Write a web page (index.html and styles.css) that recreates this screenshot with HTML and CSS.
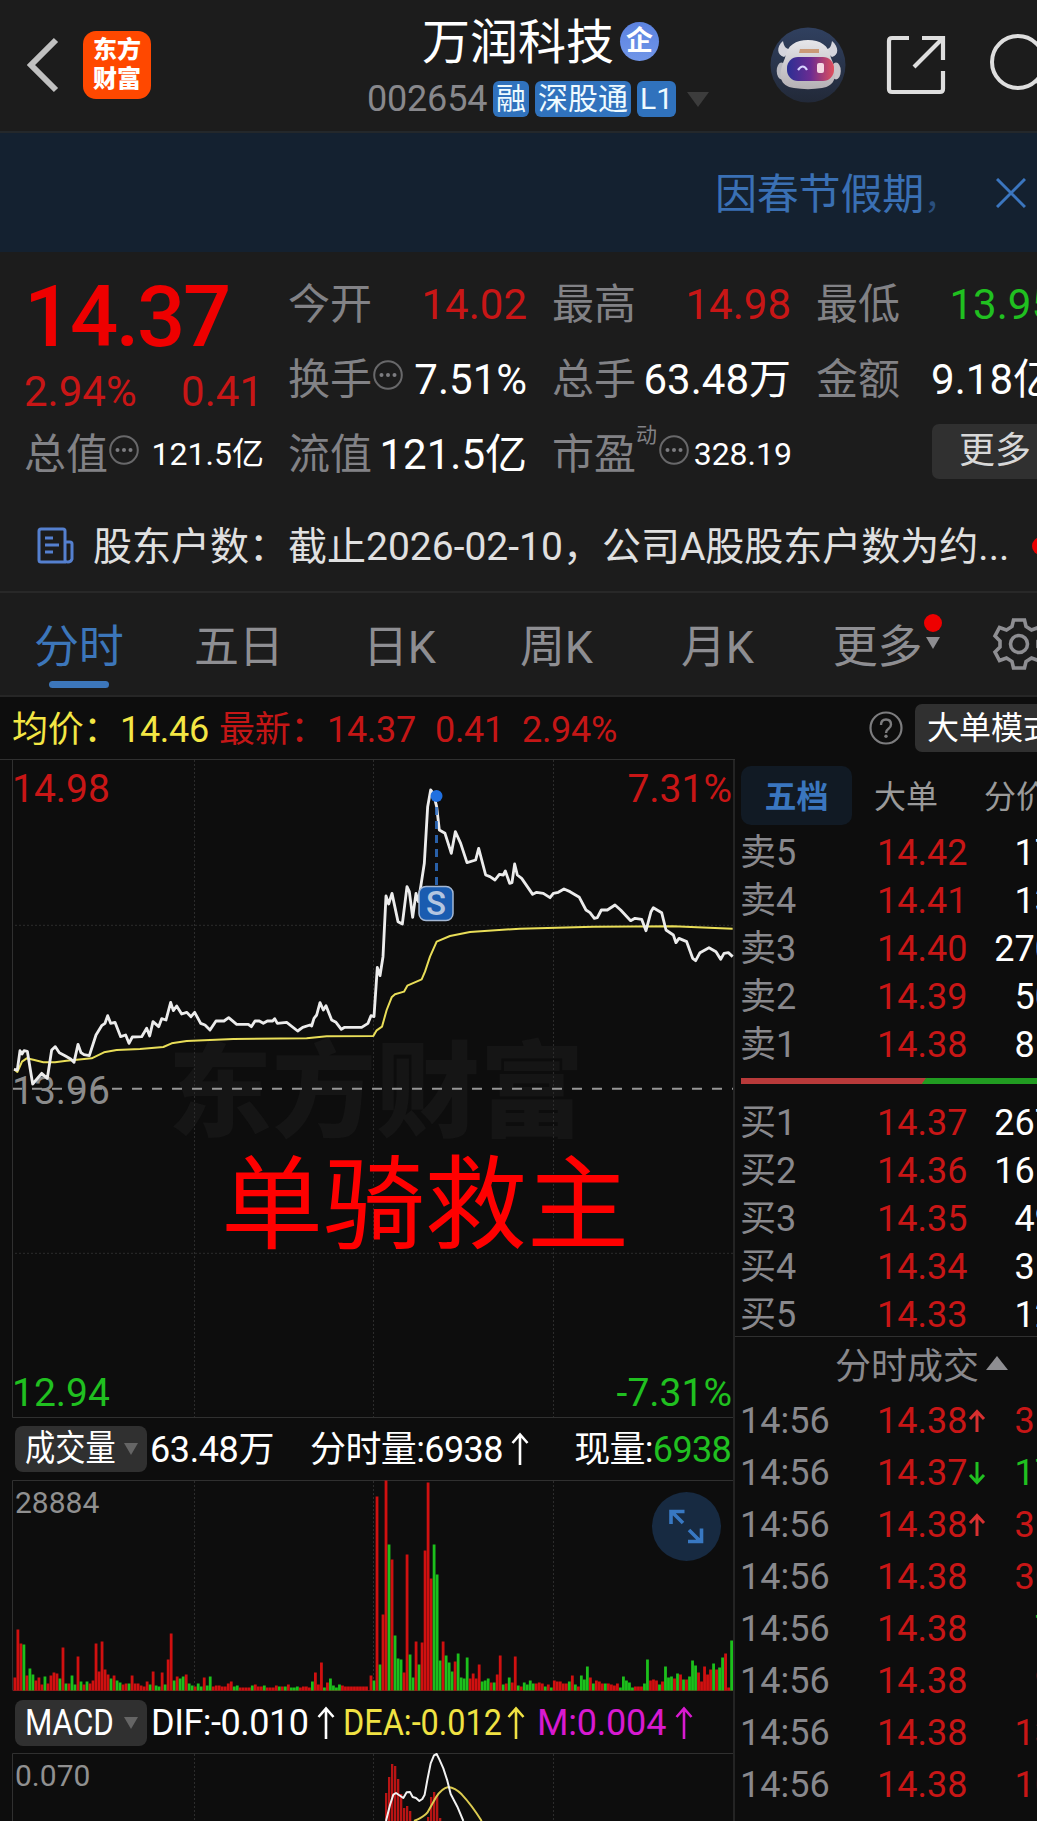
FILE: index.html
```html
<!DOCTYPE html>
<html lang="zh-CN">
<head>
<meta charset="utf-8">
<title>万润科技 002654</title>
<link rel="stylesheet" href="styles.css">
</head>
<body>
<svg class="defs" width="0" height="0">
  <symbol id="more-dots" viewBox="0 0 30 30"><circle cx="15" cy="15" r="13.8" fill="none" stroke="#68686a" stroke-width="2"/><g fill="#7c7c80"><circle cx="8.5" cy="15" r="2"/><circle cx="15" cy="15" r="2"/><circle cx="21.5" cy="15" r="2"/></g></symbol>
  <symbol id="up" viewBox="0 0 18 34"><path d="M9 33V3M1.5 11 9 2.5 16.500 11" fill="none" stroke="currentColor" stroke-width="2.6"/></symbol>
  <symbol id="tick-up" viewBox="0 0 18 24"><path d="M9 23V3M2 10 9 2.500 16 10" fill="none" stroke="currentColor" stroke-width="3"/></symbol>
</svg>
<div class="app">
  <header class="header">
    <svg class="back" width="32" height="58" viewBox="0 0 32 58"><path d="M29 4 4 29 29 54" fill="none" stroke="#c0c0c0" stroke-width="6"/></svg>
    <div class="logo"><span>东方</span><span>财富</span></div>
    <div class="title">
      <div class="name">万润科技<span class="corp">企</span></div>
      <div class="code"><span class="num">002654</span><b>融</b><b>深股通</b><b>L1</b><i class="caret"></i></div>
    </div>
    <svg class="robot" width="76" height="76" viewBox="0 0 76 76">
      <defs>
        <linearGradient id="visor" x1="0" x2="1"><stop offset="0" stop-color="#2b2f94"/><stop offset=".5" stop-color="#6b2c92"/><stop offset="1" stop-color="#e0505c"/></linearGradient>
        <linearGradient id="disc" x1="0" y1="0" x2="0" y2="1"><stop offset="0" stop-color="#30405f"/><stop offset="1" stop-color="#222938"/></linearGradient>
        <linearGradient id="shell" x1="0" y1="0" x2="0" y2="1"><stop offset="0" stop-color="#e6e6ea"/><stop offset="1" stop-color="#b4b0b4"/></linearGradient>
      </defs>
      <circle cx="38" cy="38" r="37.500" fill="url(#disc)"/>
      <path d="M13 14c-7 6-6 14 1 16l8-7c-6-1-8-3-9-9zM62 14c7 6 7 14 0 16l-8-7c6-1 7-3 8-9z" fill="#d5d5dc"/>
      <ellipse cx="11.500" cy="44" rx="4.800" ry="8.500" fill="#b9b9c0"/><ellipse cx="66" cy="44" rx="4.800" ry="8.500" fill="#c9c4c8"/>
      <path d="M15 31c2-13 11-18 23-18s21 5 23 18c8 18 4 28-9 30-9 1.500-19 1.500-28 0-14-2-17-12-9-30z" fill="url(#shell)"/>
      <rect x="17" y="30" width="47" height="24" rx="11" fill="url(#visor)"/>
      <path d="M30 22h19v4H29z" fill="#c68a5e" opacity=".8"/>
      <path d="M28 43q5-7 9 0" fill="none" stroke="#d9d4ff" stroke-width="2.200"/><rect x="47" y="36" width="7" height="10" rx="2" fill="#f4d8e2"/>
    </svg>
    <svg class="share" width="60" height="60" viewBox="0 0 60 60"><path d="M23 3H6Q3 3 3 6v48q0 3 3 3h48q3 0 3-3V36M36 3h21v22M57 3 28 32" fill="none" stroke="#dedede" stroke-width="4.200"/></svg>
    <svg class="search" width="64" height="64" viewBox="0 0 64 64"><circle cx="28" cy="28" r="26" fill="none" stroke="#dedede" stroke-width="4"/><path d="M47 47 61 61" stroke="#dedede" stroke-width="4"/></svg>
  </header>

  <div class="notice"><span>因春节假期<em>，</em></span><svg width="30" height="30" viewBox="0 0 30 30"><path d="M1 1 29 29M29 1 1 29" stroke="#3b76bf" stroke-width="3"/></svg></div>

  <section class="quote">
    <div class="price"><strong>14.37</strong><div><span>2.94%</span><span>0.41</span></div></div>
    <div class="stat"><label>今开</label><span class="red">14.02</span></div>
    <div class="stat"><label>最高</label><span class="red">14.98</span></div>
    <div class="stat"><label>最低</label><span class="green">13.95</span></div>
    <div class="stat"><label>换手<svg class="info"><use href="#more-dots"/></svg></label><span>7.51%</span></div>
    <div class="stat"><label>总手</label><span>63.48万</span></div>
    <div class="stat"><label>金额</label><span>9.18亿</span></div>
    <div class="stat"><label>总值<svg class="info"><use href="#more-dots"/></svg></label><span class="small">121.5亿</span></div>
    <div class="stat"><label>流值</label><span>121.5亿</span></div>
    <div class="stat"><label>市盈<sup>动</sup><svg class="info"><use href="#more-dots"/></svg></label><span class="small">328.19</span></div>
    <div class="stat end"><button class="more">更多</button></div>
  </section>

  <div class="news">
    <svg width="37" height="37" viewBox="0 0 37 37"><path d="M29 35H4Q2 35 2 33V4Q2 2 4 2H26Q28 2 28 4V33Q28 35 31 35T35 32V17Q35 15 33 15H28M8 11H16M8 18H22M8 25H16" fill="none" stroke="#5580cf" stroke-width="3"/></svg>
    <span>股东户数：截止2026-02-10，公司A股股东户数为约...</span><i></i>
  </div>

  <nav class="tabs">
    <a class="on">分时</a><a>五日</a><a>日K</a><a>周K</a><a>月K</a><a class="menu">更多<i></i><b></b></a>
    <svg width="54" height="54" viewBox="0 0 54 54"><g fill="none" stroke="#8e8e92" stroke-width="3.600"><path d="M21.500 3H32.500L34 9.500 39.500 13 46.500 10.500 51 19 46 24V30L51 35 46.500 43.500 39.500 41 34 44.500 32.500 51H21.500L20 44.500 14.500 41 7.500 43.500 3 35 8 30V24L3 19 7.500 10.500 14.500 13 20 9.500Z"/><circle cx="27" cy="27" r="8.500"/></g></svg>
  </nav>

  <div class="legend">
    <span class="avg">均价：</span><span class="avg v">14.46</span><span>最新：</span><span class="v">14.37</span><span class="v change">0.41</span><span class="v">2.94%</span>
    <svg width="34" height="34" viewBox="0 0 34 34"><circle cx="17" cy="17" r="15.500" fill="none" stroke="#7c7c7e" stroke-width="2.200"/><path d="M12 14q0-5.500 5-5.500t5 5q0 2.500-2.500 4.200T17 22" fill="none" stroke="#7c7c7e" stroke-width="2.400"/><circle cx="17" cy="25.300" r="1.700" fill="#7c7c7e"/></svg>
    <button>大单模式</button>
  </div>

  <main class="body">
    <section class="charts">
      <svg class="main-chart" width="735" height="659" viewBox="0 759 735 659">
        <text class="watermark" x="168" y="1129">东方财富</text>
        <path class="frame" d="M0 759.500H735M12.500 760V1417.500H733"/>
        <path class="dots" d="M194.500 760V1417M373.500 760V1417M553.500 760V1417M15 925.300H733M15 1253.300H733"/>
        <path d="M13 1088.700H733" stroke="#969696" stroke-width="2" stroke-dasharray="10 10" stroke-dashoffset="1"/>
        <g class="axis">
          <text class="red" x="12" y="802">14.98</text><text class="red" x="732" y="802" text-anchor="end">7.31%</text>
          <text x="12" y="1103.500">13.96</text>
          <text class="green" x="12" y="1405.500">12.94</text><text class="green" x="732" y="1405.500" text-anchor="end">-7.31%</text>
        </g>
        <g transform="translate(0 760) scale(.33333)" fill="none" stroke-linejoin="round">
          <path stroke="#e9de58" stroke-width="6" d="M42 928 52 936 66 905 80 895 100 899 130 907 165 907 200 902 275 895 312 877 350 870 420 867 490 861 515 850 560 843 700 837 920 835 980 829 1120 828 1130 811 1146 800 1160 750 1175 712 1185 703 1212 695 1222 677 1265 658 1275 635 1290 590 1310 545 1350 528 1410 516 1560 506 1780 500 2020 499 2198 506"/>
          <path stroke="#ececec" stroke-width="8.500" d="M42 928 52 930 60 872 66 882 72 872 82 874 98 972 125 940 142 955 155 870 166 860 178 878 195 887 212 897 222 907 234 853 243 878 252 884 268 887 288 825 305 797 315 790 323 767 332 790 345 787 362 830 377 825 387 850 397 831 425 830 440 805 449 828 459 785 476 800 485 776 498 780 512 727 520 752 530 738 545 762 560 757 573 770 584 757 602 790 615 795 630 810 648 783 672 783 686 773 710 793 745 793 754 800 765 783 778 783 790 790 802 783 818 783 824 776 832 790 860 787 893 813 908 802 930 795 935 798 942 775 950 765 960 728 970 750 978 737 995 780 1008 787 1024 808 1034 802 1085 802 1104 790 1113 767 1122 770 1132 622 1140 647 1149 590 1158 408 1166 432 1176 400 1194 485 1207 492 1221 380 1228 395 1238 472 1248 400 1255 425 1263 375 1273 310 1283 140 1292 90 1300 100 1310 140 1318 210 1335 220 1354 280 1366 215 1382 250 1401 308 1427 300 1436 265 1457 345 1470 350 1485 360 1498 343 1510 345 1516 333 1529 370 1536 368 1544 312 1552 345 1565 355 1598 403 1610 397 1630 400 1650 413 1660 400 1675 397 1692 387 1710 395 1738 412 1758 450 1770 458 1783 475 1792 473 1804 450 1822 450 1845 435 1862 450 1892 482 1905 475 1925 478 1938 512 1953 455 1960 443 1985 458 1998 510 2020 525 2028 548 2037 535 2060 545 2078 595 2087 602 2100 578 2127 563 2148 575 2162 598 2172 580 2185 578 2198 590"/>
        </g>
        <path d="M436.500 797V886" stroke="#2f6fc4" stroke-width="3" stroke-dasharray="8 6" stroke-dashoffset="4" opacity=".85"/>
        <circle cx="436.500" cy="796" r="6" fill="#2070e0"/>
        <rect x="419" y="886.500" width="34" height="34" rx="7" fill="#1a5cb0" stroke="#a4b8d4" stroke-width="1.500"/>
        <text class="sell" x="436" y="915" text-anchor="middle">S</text>
        <text class="slogan" x="221" y="1241">单骑救主</text>
      </svg>

      <div class="indicator vol">
        <button><span>成交量</span><i></i></button>
        <span class="total">63.48万</span><span class="minute">分时量:6938</span><svg><use href="#up"/></svg><span class="now">现量:<em>6938</em></span>
      </div>
      <svg class="vol-chart" width="735" height="212" viewBox="0 1480 735 212">
        <path class="frame" d="M733 1480.500H12.500V1690.500"/>
        <path class="dots" d="M194.500 1481V1690M373.500 1481V1690M553.500 1481V1690"/>
        <path d="M13 1690.500H733" stroke="#6a1d1d" stroke-width="1"/>
        <g id="bars"></g>
        <text class="scale" x="15" y="1513">28884</text>
        <circle cx="686.500" cy="1526.500" r="34.500" fill="#172a41"/>
        <path d="M683 1523 671 1511M671 1524V1511.500H684.500M689 1530 701 1542M701.500 1528.500V1541.500H688" fill="none" stroke="#3878c2" stroke-width="3.600"/>
      </svg>

      <div class="indicator macd">
        <button><span>MACD</span><i></i></button>
        <span class="dif">DIF:-0.010</span><svg><use href="#up"/></svg>
        <span class="dea">DEA:-0.012</span><svg class="y"><use href="#up"/></svg>
        <span class="m">M:0.004</span><svg class="p"><use href="#up"/></svg>
      </div>
      <svg class="macd-chart" width="735" height="68" viewBox="0 1753 735 68">
        <path class="frame" d="M733 1753.500H12.500V1821"/>
        <path class="dots" d="M194.500 1754V1821M373.500 1754V1821M553.500 1754V1821"/>
        <text class="scale" x="15" y="1786">0.070</text>
        <g id="macd-bars"></g>
        <g transform="translate(360 1390) scale(.33333)" fill="none" stroke-linejoin="round">
          <path stroke="#dccb50" stroke-width="6" d="M162 1293Q190 1282 202 1268 215 1245 228 1222 245 1195 265 1191 285 1193 305 1213 335 1245 365 1293"/>
          <path stroke="#f2f2f2" stroke-width="6" d="M78 1293 90 1245 100 1214 108 1209 130 1224 140 1207 150 1206 158 1221 168 1224 178 1233 187 1227 194 1214 202 1170 212 1120 222 1096 230 1092 238 1108 250 1135 262 1172 272 1212 292 1250 310 1293"/>
        </g>
      </svg>
    </section>

    <aside class="book">
      <div class="book-tabs"><a class="on">五档</a><a>大单</a><a>分价</a></div>
      <div class="levels">
        <div><span>卖5</span><span>14.42</span><span>17</span></div>
        <div><span>卖4</span><span>14.41</span><span>13</span></div>
        <div><span>卖3</span><span>14.40</span><span>270</span></div>
        <div><span>卖2</span><span>14.39</span><span>50</span></div>
        <div><span>卖1</span><span>14.38</span><span>81</span></div>
      </div>
      <div class="ratio"></div>
      <div class="levels bids">
        <div><span>买1</span><span>14.37</span><span>267</span></div>
        <div><span>买2</span><span>14.36</span><span>161</span></div>
        <div><span>买3</span><span>14.35</span><span>49</span></div>
        <div><span>买4</span><span>14.34</span><span>31</span></div>
        <div><span>买5</span><span>14.33</span><span>12</span></div>
      </div>
      <div class="trades-head">分时成交<i></i></div>
      <div class="trades">
        <div><span>14:56</span><span>14.38<svg><use href="#tick-up"/></svg></span><span>35</span></div>
        <div><span>14:56</span><span>14.37<svg class="down"><use href="#tick-up"/></svg></span><span class="green">17</span></div>
        <div><span>14:56</span><span>14.38<svg><use href="#tick-up"/></svg></span><span>35</span></div>
        <div><span>14:56</span><span>14.38</span><span>30</span></div>
        <div><span>14:56</span><span>14.38</span><span class="green">7</span></div>
        <div><span>14:56</span><span>14.38</span><span>9</span></div>
        <div><span>14:56</span><span>14.38</span><span>13</span></div>
        <div><span>14:56</span><span>14.38</span><span>10</span></div>
      </div>
    </aside>
  </main>
</div>
<script src="chart.js"></script>
</body>
</html>
```
FILE: styles.css
```css
* { box-sizing: border-box; }
body {
  margin: 0;
  width: 1037px;
  height: 1821px;
  overflow: hidden;
  background: #0d0d0d;
  color: #fff;
  font-family: Roboto, "Noto Sans CJK SC", sans-serif;
  white-space: nowrap;
}
i, em { font-style: normal; }
button { border: 0; margin: 0; padding: 0; font: inherit; color: inherit; background: #303030; }
.defs { position: absolute; }
.app { width: 1080px; height: 1821px; overflow: hidden; }
.red { color: #c81616; fill: #c81616; }
.green { color: #20c020; fill: #20c020; }

/* Title bar */
.header { display: flex; height: 133px; background: #1c1c1c; border-bottom: 2px solid #24282b; }
.back { margin: 36px 0 0 27px; flex: none; }
.logo {
  display: flex; flex-direction: column; align-items: center; justify-content: center;
  width: 68px; height: 68px; margin: 31px 0 0 24px; flex: none;
  border-radius: 13px; background: #ff4800;
  font-size: 24px; line-height: 29px; font-weight: 900;
}
.title { width: 350px; margin-left: 216px; flex: none; }
.name { display: flex; align-items: center; height: 58px; margin: 14px 0 0 55px; font-size: 48px; line-height: 58px; }
.corp {
  width: 39px; height: 39px; margin: -4px 0 0 6px; border-radius: 50%;
  background: linear-gradient(#5b82e0, #7196e8); font-size: 27px; line-height: 38px; font-weight: 700; text-align: center;
}
.code { display: flex; align-items: center; gap: 6px; height: 36px; margin-top: 9px; color: #88888c; font-size: 36px; line-height: 36px; }
.code b { height: 36px; padding: 0 3px; border-radius: 6px; background: #3072bd; color: #eefaff; font-size: 30px; line-height: 35px; font-weight: 400; }
.code .num { width: 120px; letter-spacing: -.2px; }
.code b:nth-of-type(3) { width: 39px; }
.caret { margin-left: 5px; border: 11px solid transparent; border-top: 15px solid #3c3c3c; border-bottom: 0; }
.robot { margin: 27px 0 0 53px; flex: none; }
.share { margin: 35px 0 0 40px; flex: none; }
.search { margin: 34px 0 0 44px; flex: none; }

.notice { display: flex; align-items: center; gap: 30px; height: 119px; padding-left: 715px; background: #142130; color: #3a70b4; font-size: 42px; }
.notice span { padding-bottom: 4px; letter-spacing: -.2px; }
.notice em { color: #2a4f7e; font-size: 34px; display: inline-block; width: 42px; }

/* Quote summary */
.quote { display: grid; grid-template: 75px 75px 75px / repeat(4, 238px); column-gap: 26px; height: 240px; padding: 15px 0 0 25px; background: #1c1c1c; font-size: 42px; line-height: 75px; }
.price { grid-row: 1 / 3; padding-top: 10px; color: #c81616; }
.price strong { display: block; color: #ee0000; font-size: 85px; line-height: 80px; font-weight: 500; letter-spacing: -2.4px; margin-left: -1px; }
.price div { display: flex; justify-content: space-between; margin-top: 10px; margin-left: -1px; line-height: 50px; }
.stat { display: flex; justify-content: space-between; }
.stat label { display: flex; margin-left: -1px; color: #828286; }
.stat .small { margin-right: -1px; font-size: 32px; }
.info { width: 30px; height: 30px; margin: 18px 0 0 1px; }
.stat sup { width: 22px; font-size: 21px; line-height: 36px; vertical-align: top; }
.end { justify-content: flex-end; }
.more { width: 128px; height: 55px; margin: 7px -5px 0 0; padding-right: 2px; border-radius: 7px; color: #d8d8d8; font-size: 36px; line-height: 53px; }

.news { display: flex; align-items: center; height: 101px; padding: 8px 0 0 37px; background: #1c1c1c; border-bottom: 2px solid #282828; color: #e0e0e0; font-size: 39px; line-height: 50px; }
.news span { width: 917px; margin-left: 19px; padding-top: 2px; }
.news i { width: 18px; height: 18px; margin-left: 22px; border-radius: 50%; background: #e80000; flex: none; }

/* Period tabs */
.tabs { display: grid; grid-template-columns: 160px 169px 157px 161px 151px 160px auto; height: 104px; padding-left: 34px; background: #1c1c1c; border-bottom: 2px solid #262626; color: #8e8e92; font-size: 45px; line-height: 109px; letter-spacing: -.3px; }
.tabs .on { color: #3c76ba; }
.tabs .on::after { content: ""; display: block; width: 60px; height: 7px; margin: -21px 0 0 15px; border-radius: 4px; background: #3c76ba; }
.tabs svg { margin-top: 24px; }
.menu { display: grid; grid-template-columns: 91px 20px; justify-items: center; }
.menu i { width: 18px; height: 18px; margin-top: 21px; border-radius: 50%; background: #ee0000; }
.menu b { grid-column: 2; margin-top: -65px; height: 0; border: 7px solid transparent; border-top: 12px solid #8e8e92; border-bottom: 0; }

.legend { display: flex; align-items: center; height: 62px; padding-left: 12px; color: #c41616; font-size: 36px; line-height: 62px; }
.legend > span { width: 108px; padding-top: 3px; letter-spacing: -.3px; }
.legend .v { width: 99px; }
.legend .change { width: 87px; margin-left: 9px; }
.legend .avg { color: #f3e644; }
.legend svg { margin-left: auto; }
.legend button { width: 160px; height: 48px; margin-left: 12px; margin-right: 5px; border-radius: 7px; color: #fff; font-size: 32px; line-height: 48px; text-align: left; padding-left: 12px; }

/* Charts */
.body { display: flex; }
.charts { width: 735px; height: 1062px; border-right: 2px solid #242424; flex: none; }
.charts > svg { display: block; }
.frame { fill: none; stroke: #303030; }
.dots { fill: none; stroke: #2c2c2c; stroke-dasharray: 2 2; }
.axis { font-size: 39px; fill: #8b8b8b; }
.watermark { font-size: 104px; font-weight: 900; fill: #151515; }
.slogan { font-size: 102px; fill: #ff0000; }
.sell { font-size: 33px; font-weight: 500; fill: #b4c6e0; }
.scale { font-size: 30px; fill: #909090; }

.indicator { display: flex; align-items: center; height: 62px; padding-left: 15px; font-size: 36px; line-height: 63px; }
.indicator button { display: flex; align-items: center; width: 132px; height: 46px; padding-left: 10px; border-radius: 8px; line-height: 46px; flex: none; }
.indicator button span { width: 99px; transform: scaleX(.84); transform-origin: 0 50%; }
.indicator button i { border: 7px solid transparent; border-top: 12px solid #656565; border-bottom: 0; }
.indicator > svg { width: 18px; height: 34px; flex: none; }
.total { width: 160px; margin-left: 3px; letter-spacing: -.4px; }
.minute { width: 201px; letter-spacing: -.6px; }
.now { margin-left: auto; padding-right: 2px; letter-spacing: -.7px; }
.now em { color: #20c020; }
.vol > span { padding-top: 2px; }
.macd { height: 61px; line-height: 60px; }
.macd button { line-height: 44px; }
.macd button span { transform: scaleX(.87); }
.dif { width: 166px; margin-left: 4px; letter-spacing: -.5px; }
.dea { width: 164px; margin-left: 8px; color: #f0e243; transform: scaleX(.9); transform-origin: 0 50%; }
.m { width: 138px; margin-left: 12px; color: #d81ad0; letter-spacing: -.2px; }
.y { color: #f0e243; }
.p { color: #d81ad0; }

/* Order book */
.book { width: 320px; font-size: 36px; }
.book-tabs { display: flex; height: 69px; padding: 7px 0 0 6px; color: #9a9a9a; font-size: 32px; line-height: 62px; }
.book-tabs a { width: 110px; flex: none; }
.book-tabs .on { width: 111px; height: 59px; margin-right: 22px; border-radius: 10px; background: #111a24; color: #3a76bf; font-weight: 700; text-align: center; }
.levels div, .trades div { display: grid; grid-template-columns: 137px 1fr auto; padding-left: 5px; height: 48px; line-height: 50px; color: #c81616; }
.levels span:first-child, .trades span:first-child { color: #88888c; }
.levels span:last-child { color: #fff; }
.ratio { height: 6px; margin: 9.500px 0 14.500px 6px; background: linear-gradient(125deg, #b83a3a 151px, #219b21 152px); }
.bids { height: 238px; }
.trades-head { display: flex; align-items: center; gap: 7px; height: 58px; padding: 3px 0 0 100px; border-top: 1px solid #303030; color: #88888c; line-height: 52px; }
.trades-head i { margin-top: -8px; border: 11px solid transparent; border-bottom: 14px solid #8e8e92; border-top: 0; }
.trades div { height: 52px; line-height: 54px; }
.trades svg { width: 18px; height: 24px; margin-left: 1px; color: #d83030; }
.trades .down { color: #20c020; transform: rotate(180deg); }
```
FILE: chart.js
```js
// One minute per bar: colour (r = up, g = down) followed by height in pixels.
const morning = "r13 r61 r47 g46 r15 g22 g16 r10 r13 r6 g14 r7 r15 r18 r17 g12 r43 g7 r7 g15 g6 r34 g9 r6 g9 r7 r10 r47 r19 r49 r21 r16 g12 r15 g10 g8 r6 r7 g7 r15 r7 r7 r5 r4 r9 g6 r19 g5 g4 r18 g6 r31 r57 g10 r14 g12 g14 r16 g7 g5 r4 g7 g4 r13 g5 g14 r4 r5 r5 r4 r4 r7 r9 g4 g5 r3 r3 r3 r3 g5 r6 r4 r4 g5 r3 r3 r3 r5 g4 r4 g4 r6 g3 g3 g4 r3 r4 r4 r3 g9 r18 r6 r28 g3 r8 g12 g5 g3 g6 r5 r4 r4 r4 r4 r4 r4 r4 r4";
const afternoon = "r15 g10 r194 g26 r76 r210 g146 r131 g55 g32 g31 r18 r136 g36 g13 r49 g26 r48 r140 r208 r112 g146 g116 g30 r49 g35 g28 g19 r29 g37 g13 g12 g33 r12 r17 r12 r26 g9 g10 g12 r8 g8 r16 r35 g6 r7 g13 r8 r34 g5 r4 g8 g6 g10 g7 r7 r8 r7 g4 r6 g3 r10 r9 r9 r7 r7 g9 r15 g6 r4 g15 g11 g24 r13 g7 r10 r9 r7 g7 r7 r6 r5 r7 g3 g14 g10 g8 g3 r4 r4 r4 g7 g31 r10 r11 r10 g6 r9 g24 g13 g14 r12 g17 r16 g11 r11 g14 g30 g25 r18 r9 r24 r16 r21 g27 r21 g23 g33 r37 r3 g50";
const macd = { 385: 28, 388: 44, 391: 57, 394: 55, 397: 42, 400: 27, 403: 13, 406: 15, 409: 10, 427: 4, 430: 24, 433: 29, 436: 26, 439: 3 };

function bar(parent, x, bottom, height, width, color) {
  const r = document.createElementNS("http://www.w3.org/2000/svg", "rect");
  r.setAttribute("x", x);
  r.setAttribute("y", bottom - height);
  r.setAttribute("width", width);
  r.setAttribute("height", height);
  r.setAttribute("fill", color);
  parent.appendChild(r);
}

const volume = document.getElementById("bars");
for (const [data, start] of [[morning, 13.5], [afternoon, 369.6]]) {
  data.split(" ").forEach((d, i) => {
    bar(volume, start + i * 3.005, 1690.5, Number(d.slice(1)), 2.8, d[0] === "r" ? "#d01010" : "#1cc01c");
  });
}

const histogram = document.getElementById("macd-bars");
for (const x in macd) bar(histogram, Number(x), 1821, macd[x], 2.3, "#b81414");
```
